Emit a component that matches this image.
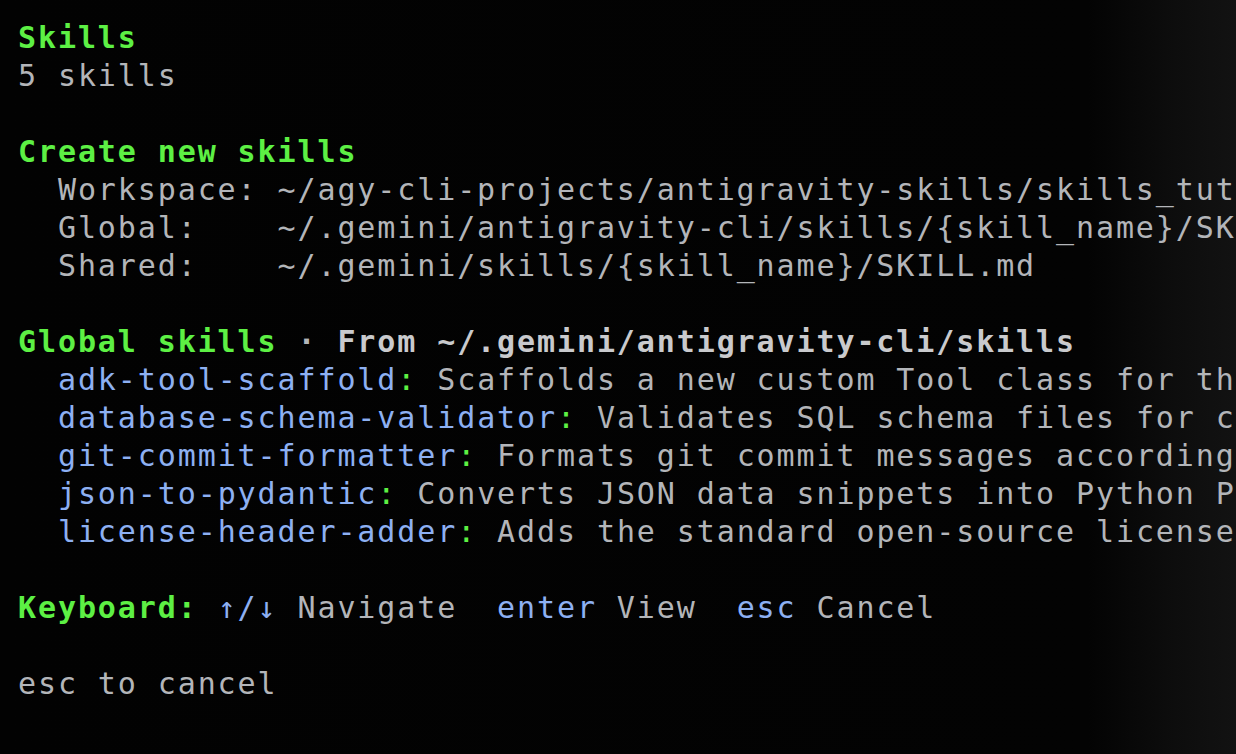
import React from 'react';

const green = 'text-[#5df044]';
const grey = 'text-[#b3b5b9]';
const blue = 'text-[#8db0f2]';

// terminal is narrower than the lines, so only the visible part is kept
const skills = [
    { name: 'adk-tool-scaffold', desc: 'Scaffolds a new custom Tool class for th' },
    { name: 'database-schema-validator', desc: 'Validates SQL schema files for c' },
    { name: 'git-commit-formatter', desc: 'Formats git commit messages according' },
    { name: 'json-to-pydantic', desc: 'Converts JSON data snippets into Python P' },
    { name: 'license-header-adder', desc: 'Adds the standard open-source license' },
];

const Line: React.FC<{ children?: React.ReactNode }> = ({ children }) => (
    <div className="h-[38px] whitespace-pre">{children}</div>
);

const App: React.FC = () => {
    return (
        <div className="w-[1236px] h-[754px] overflow-hidden bg-[linear-gradient(to_right,#020202_0%,#030303_88%,#0d0d0d_95%,#121212_100%)]">
            <div
                className="pt-[19px] pl-[18px] text-[30px] leading-[38px] tracking-[1.9px]"
                style={{ fontFamily: '"DejaVu Sans Mono", Menlo, monospace' }}
            >
                <Line><span className={`${green} font-bold`}>Skills</span></Line>
                <Line><span className={grey}>5 skills</span></Line>
                <Line />
                <Line><span className={`${green} font-bold`}>Create new skills</span></Line>
                <Line><span className={grey}>  Workspace: ~/agy-cli-projects/antigravity-skills/skills_tut</span></Line>
                <Line><span className={grey}>  Global:    ~/.gemini/antigravity-cli/skills/{'{skill_name}'}/SK</span></Line>
                <Line><span className={grey}>  Shared:    ~/.gemini/skills/{'{skill_name}'}/SKILL.md</span></Line>
                <Line />
                <Line>
                    <span className={`${green} font-bold`}>Global skills</span>
                    <span className={`${grey} font-bold`}> · </span>
                    <span className="text-[#c9cacd] font-bold">From ~/.gemini/antigravity-cli/skills</span>
                </Line>
                {skills.map((s) => (
                    <Line key={s.name}>
                        <span>  </span>
                        <span className={blue}>{s.name}</span>
                        <span className={green}>: </span>
                        <span className={grey}>{s.desc}</span>
                    </Line>
                ))}
                <Line />
                <Line>
                    <span className={`${green} font-bold`}>Keyboard: </span>
                    <span className={blue}>↑/↓</span>
                    <span className={grey}> Navigate  </span>
                    <span className={blue}>enter</span>
                    <span className={grey}> View  </span>
                    <span className={blue}>esc</span>
                    <span className={grey}> Cancel</span>
                </Line>
                <Line />
                <Line><span className={grey}>esc to cancel</span></Line>
            </div>
        </div>
    );
};

export default App;
